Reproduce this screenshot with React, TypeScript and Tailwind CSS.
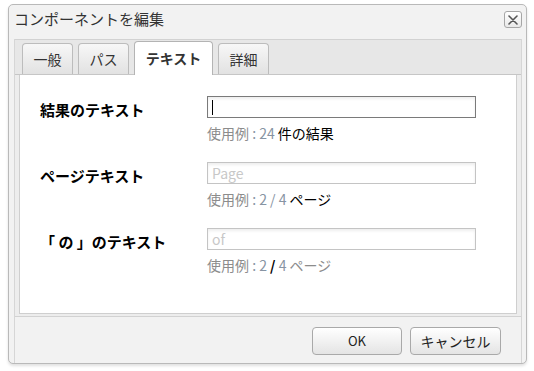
import React from 'react';

interface FieldRow {
    label: React.ReactNode;
    placeholder: string;
    focused?: boolean;
    hint: React.ReactNode;
}

const Tab: React.FC<{ label: string; active?: boolean; width: string }> = ({ label, active, width }) => {
    if (active) {
        return (
            <div className={`${width} h-[34px] -mb-px flex items-center justify-center rounded-t-[4px] border border-b-0 border-[#b4b4b4] bg-white text-[14px] font-bold text-[#333]`}>
                {label}
            </div>
        );
    }
    return (
        <div className={`${width} h-[31px] flex items-center justify-center rounded-t-[4px] border border-b-0 border-[#bcbcbc] bg-gradient-to-b from-[#f7f7f7] to-[#e2e2e2] text-[14px] text-[#333]`}>
            {label}
        </div>
    );
};

const Hint: React.FC<{ children: React.ReactNode }> = ({ children }) => (
    <div className="mt-[6px] h-[18px] leading-[18px] text-[14px] text-[#8c8c8c] whitespace-nowrap">{children}</div>
);

export default function App() {
    const rows: FieldRow[] = [
        {
            label: '結果のテキスト',
            placeholder: '',
            focused: true,
            hint: (
                <>
                    使用例<span className="text-[#8794a3]"> : 24</span> <span className="text-black">件の結果</span>
                </>
            ),
        },
        {
            label: 'ページテキスト',
            placeholder: 'Page',
            hint: (
                <>
                    使用例<span className="text-[#8794a3]"> : 2 / 4</span> <span className="text-black">ページ</span>
                </>
            ),
        },
        {
            label: '「 の 」のテキスト',
            placeholder: 'of',
            hint: (
                <>
                    使用例<span className="text-[#8794a3]"> : 2</span> <span className="text-black font-bold">/</span>{' '}
                    <span className="text-[#8794a3]">4</span> ページ
                </>
            ),
        },
    ];

    return (
        <div className="w-[534px] h-[371px] bg-white pl-[8px] pt-[4px] font-['Noto_Sans_CJK_JP',sans-serif]">
            <div className="w-[519px] h-[360px] flex flex-col rounded-[5px] border border-[#b9b9b9] bg-[#f2f2f2] shadow-[0_2px_3px_rgba(0,0,0,0.12)]">
                {/* header */}
                <div className="h-[34px] flex items-start justify-between pl-[5px] pr-[4px]">
                    <div className="mt-[4px] text-[15px] leading-[20px] text-[#333]">コンポーネントを編集</div>
                    <button className="mt-[6px] w-[18px] h-[17px] flex items-center justify-center rounded-[3px] border border-[#a6a6a6] bg-gradient-to-b from-white to-[#e9e9e9]">
                        <svg width="10" height="10" viewBox="0 0 10 10">
                            <path d="M1 1 L9 9 M9 1 L1 9" stroke="#555" strokeWidth="1.6" strokeLinecap="round" />
                        </svg>
                    </button>
                </div>

                <div className="flex-1 ml-[5px] mr-[4px] flex flex-col border-x border-[#d6d6d6]">
                    {/* tab frame */}
                    <div className="h-[278px] flex flex-col border-y border-[#d2d2d2] bg-[#ededed]">
                        <div className="h-[35px] flex items-end gap-[5px] pl-[7px] bg-[#e7e7e7] border-b border-[#c6c6c6]">
                            <Tab label="一般" width="w-[51px]" />
                            <Tab label="パス" width="w-[51px]" />
                            <Tab label="テキスト" width="w-[79px]" active />
                            <Tab label="詳細" width="w-[51px]" />
                        </div>
                        <div className="flex-1 mx-[4px] mb-[2px] border border-t-0 border-[#cfcfcf] bg-white pl-[20px] pt-[21px] flex flex-col gap-[20px]">
                            {rows.map((row, i) => (
                                <div key={i} className="flex">
                                    <div className="w-[167px] pt-[3px] h-[22px] leading-[22px] text-[15px] font-bold text-black whitespace-nowrap">
                                        {row.label}
                                    </div>
                                    <div className="flex flex-col">
                                        <div
                                            className={`w-[269px] h-[22px] flex items-center pl-[4px] border bg-white shadow-[inset_0_2px_3px_rgba(0,0,0,0.07)] text-[14px] ${row.focused ? 'border-[#7a7a7a]' : 'border-[#c4c4c4]'}`}
                                        >
                                            {row.focused ? (
                                                <span className="w-px h-[15px] bg-black" />
                                            ) : (
                                                <span className="text-[#c8c8c8] leading-[20px]">{row.placeholder}</span>
                                            )}
                                        </div>
                                        <Hint>{row.hint}</Hint>
                                    </div>
                                </div>
                            ))}
                        </div>
                    </div>

                    {/* footer */}
                    <div className="flex-1 flex justify-end items-start gap-[8px] pt-[10px] pr-[20px]">
                        <button className="w-[90px] h-[28px] rounded-[4px] border border-[#a9a9a9] bg-gradient-to-b from-white to-[#e4e4e4] text-[13px] text-[#222]">
                            OK
                        </button>
                        <button className="w-[91px] h-[28px] rounded-[4px] border border-[#a9a9a9] bg-gradient-to-b from-white to-[#e4e4e4] text-[14px] text-[#222]">
                            キャンセル
                        </button>
                    </div>
                </div>
            </div>
        </div>
    );
}
